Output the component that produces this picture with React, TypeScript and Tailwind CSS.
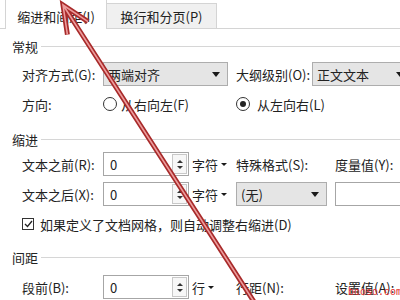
import React from 'react'

function Caret({ size = 'md' }: { size?: 'sm' | 'md' }) {
  const w = size === 'sm' ? 6 : 8
  const h = size === 'sm' ? 3 : 5
  return (
    <svg width={w} height={h} viewBox={`0 0 ${w} ${h}`} className="shrink-0">
      <polygon points={`0,0 ${w},0 ${w / 2},${h}`} fill="#1a1a1a" />
    </svg>
  )
}

function Select({ text, width }: { text: string; width: string }) {
  return (
    <div className={`${width} h-[24px] shrink-0 flex items-center justify-between border border-[#adadad] bg-[#e5e5e5] pl-[4px] pr-[7px]`}>
      <span>{text}</span>
      <Caret />
    </div>
  )
}

function SpinBox({ value }: { value: string }) {
  return (
    <div className="w-[86px] h-[24px] shrink-0 flex items-center justify-between border border-[#a6a6a6] bg-white pl-[6px]">
      <span>{value}</span>
      <div className="w-[15px] h-[20px] mr-[1px] flex flex-col items-center justify-center gap-[3px] border border-[#c8c8c8] bg-[#f7f7f7]">
        <svg width="6" height="3" viewBox="0 0 6 3"><polygon points="0,3 6,3 3,0" fill="#333" /></svg>
        <svg width="6" height="3" viewBox="0 0 6 3"><polygon points="0,0 6,0 3,3" fill="#333" /></svg>
      </div>
    </div>
  )
}

function Unit({ text }: { text: string }) {
  return (
    <div className="w-[47px] shrink-0 flex items-center gap-[3px] pl-[3px]">
      <span>{text}</span>
      <Caret size="sm" />
    </div>
  )
}

function Header({ text, className }: { text: string; className: string }) {
  return (
    <div className={`flex items-center h-[20px] pl-[12px] ${className}`}>
      <span>{text}</span>
      <div className="flex-1 h-px bg-[#d6d6d6] ml-[3px]" />
    </div>
  )
}

function Radio({ checked }: { checked?: boolean }) {
  return (
    <div className="w-[14px] h-[14px] shrink-0 rounded-full border border-[#333] bg-white flex items-center justify-center">
      {checked && <div className="w-[6px] h-[6px] rounded-full bg-[#222]" />}
    </div>
  )
}

export default function App() {
  return (
    <div className="relative w-[400px] h-[300px] overflow-hidden bg-white text-[13px] leading-none text-[#222] font-['Noto_Sans_CJK_SC',sans-serif]">
      {/* tabs */}
      <div className="flex h-[29px]">
        <div className="w-[5px] border-b border-[#d4d4d4]" />
        <div className="w-[102px] border-x border-[#d4d4d4] flex items-center justify-center pt-[3px]">缩进和间距(I)</div>
        <div className="w-[110px] mt-[3px] bg-[#f0f0f0] border-t border-r border-b border-[#d4d4d4] flex items-center justify-center">换行和分页(P)</div>
        <div className="flex-1 border-b border-[#d4d4d4]" />
      </div>

      <Header text="常规" className="mt-[7px]" />

      <div className="flex items-center h-[24px] mt-[6px] pl-[22px]">
        <span className="w-[81px] shrink-0">对齐方式(G):</span>
        <Select text="两端对齐" width="w-[125px]" />
        <span className="w-[76px] shrink-0 ml-[8px]">大纲级别(O):</span>
        <Select text="正文文本" width="w-[100px]" />
      </div>

      <div className="flex items-center h-[20px] mt-[8px] pl-[22px]">
        <span className="w-[81px] shrink-0">方向:</span>
        <div className="w-[133px] shrink-0 flex items-center gap-[4px]">
          <Radio />
          <span>从右向左(F)</span>
        </div>
        <div className="flex items-center gap-[7px]">
          <Radio checked />
          <span>从左向右(L)</span>
        </div>
      </div>

      <Header text="缩进" className="mt-[15px]" />

      <div className="flex items-center h-[24px] mt-[3px] pl-[22px]">
        <span className="w-[81px] shrink-0">文本之前(R):</span>
        <SpinBox value="0" />
        <Unit text="字符" />
        <span className="w-[99px] shrink-0">特殊格式(S):</span>
        <span>度量值(Y):</span>
      </div>

      <div className="flex items-center h-[24px] mt-[6px] pl-[22px]">
        <span className="w-[81px] shrink-0">文本之后(X):</span>
        <SpinBox value="0" />
        <Unit text="字符" />
        <Select text="(无)" width="w-[91px]" />
        <div className="w-[80px] h-[24px] shrink-0 ml-[8px] border border-[#a6a6a6] bg-white" />
      </div>

      <div className="flex items-center h-[20px] mt-[8px] pl-[22px] gap-[6px]">
        <div className="w-[12px] h-[12px] shrink-0 border border-[#333] bg-white flex items-center justify-center">
          <svg width="9" height="8" viewBox="0 0 9 8">
            <path d="M1 4 L3.5 6.5 L8 1" fill="none" stroke="#222" strokeWidth="1.3" />
          </svg>
        </div>
        <span>如果定义了文档网格，则自动调整右缩进(D)</span>
      </div>

      <Header text="间距" className="mt-[13px]" />

      <div className="flex items-center h-[24px] mt-[8px] pl-[22px]">
        <span className="w-[81px] shrink-0">段前(B):</span>
        <SpinBox value="0" />
        <Unit text="行" />
        <span className="w-[99px] shrink-0">行距(N):</span>
        <span>设置值(A):</span>
      </div>

      {/* watermark */}
      <span className="absolute left-[348px] top-[288px] text-[10px] leading-none text-[#e0282a] font-['Liberation_Mono',monospace]">booso.com</span>

      {/* red annotation arrow */}
      <svg className="absolute inset-0 pointer-events-none" width="400" height="300" viewBox="0 0 400 300">
        <path d="M67.4 34.7 L63 5 L88 21.6 M63 5 L258 308" fill="none" stroke="#a82a2a" strokeWidth="5" strokeLinejoin="miter" strokeLinecap="butt" />
        <path d="M67.4 34.7 L63 5 L88 21.6 M63 5 L258 308" fill="none" stroke="#ec9c9c" strokeWidth="1.6" strokeLinejoin="miter" />
      </svg>
    </div>
  )
}
